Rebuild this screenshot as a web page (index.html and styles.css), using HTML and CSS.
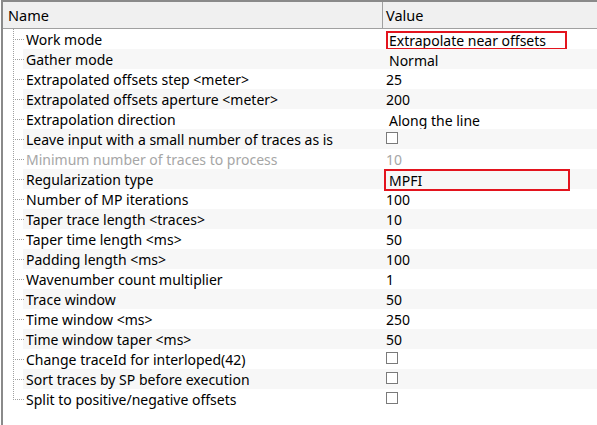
FILE: index.html
```html
<!DOCTYPE html>
<html>
<head>
<meta charset="utf-8">
<link rel="stylesheet" href="styles.css">
</head>
<body>
<div class="grid">
  <div class="head">
    <div class="hcell hname">Name</div>
    <div class="hcell hvalue">Value</div>
  </div>
  <div class="rows">
    <div class="row"><div class="branch"></div><div class="name">Work mode</div><div class="value combo">Extrapolate near offsets<span class="mark mark1"></span></div></div>
    <div class="row alt"><div class="branch"></div><div class="name">Gather mode</div><div class="value combo">Normal</div></div>
    <div class="row"><div class="branch"></div><div class="name">Extrapolated offsets step &lt;meter&gt;</div><div class="value">25</div></div>
    <div class="row alt"><div class="branch"></div><div class="name">Extrapolated offsets aperture &lt;meter&gt;</div><div class="value">200</div></div>
    <div class="row"><div class="branch"></div><div class="name">Extrapolation direction</div><div class="value combo">Along the line</div></div>
    <div class="row alt"><div class="branch"></div><div class="name">Leave input with a small number of traces as is</div><div class="value"><span class="check"></span></div></div>
    <div class="row disabled"><div class="branch"></div><div class="name">Minimum number of traces to process</div><div class="value">10</div></div>
    <div class="row alt"><div class="branch"></div><div class="name">Regularization type</div><div class="value combo">MPFI<span class="mark mark2"></span></div></div>
    <div class="row"><div class="branch"></div><div class="name">Number of MP iterations</div><div class="value">100</div></div>
    <div class="row alt"><div class="branch"></div><div class="name">Taper trace length &lt;traces&gt;</div><div class="value">10</div></div>
    <div class="row"><div class="branch"></div><div class="name">Taper time length &lt;ms&gt;</div><div class="value">50</div></div>
    <div class="row alt"><div class="branch"></div><div class="name">Padding length &lt;ms&gt;</div><div class="value">100</div></div>
    <div class="row"><div class="branch"></div><div class="name">Wavenumber count multiplier</div><div class="value">1</div></div>
    <div class="row alt"><div class="branch"></div><div class="name">Trace window</div><div class="value">50</div></div>
    <div class="row"><div class="branch"></div><div class="name">Time window &lt;ms&gt;</div><div class="value">250</div></div>
    <div class="row alt"><div class="branch"></div><div class="name">Time window taper &lt;ms&gt;</div><div class="value">50</div></div>
    <div class="row"><div class="branch"></div><div class="name">Change traceId for interloped(42)</div><div class="value"><span class="check"></span></div></div>
    <div class="row alt"><div class="branch"></div><div class="name">Sort traces by SP before execution</div><div class="value"><span class="check"></span></div></div>
    <div class="row last"><div class="branch"></div><div class="name">Split to positive/negative offsets</div><div class="value"><span class="check"></span></div></div>
  </div>
</div>
</body>
</html>
```

FILE: styles.css
```css
html, body {
  margin: 0;
  padding: 0;
  background: #ffffff;
}
body {
  width: 597px;
  height: 425px;
  overflow: hidden;
  font-family: "Noto Sans", "Open Sans", sans-serif;
  font-size: 14px;
  color: #000000;
}
.grid {
  margin-left: 1px;
  height: 425px;
  border-left: 2px solid #8a8a8a;
  border-top: 2px solid #8a8a8a;
  box-sizing: border-box;
}
.head {
  display: flex;
  height: 26px;
  background: #f0f0f0;
  border-bottom: 1px solid #a0a0a0;
}
.hcell {
  display: flex;
  align-items: center;
  padding-left: 5px;
  font-size: 14.5px;
}
.hname {
  width: 374px;
  border-right: 1px solid #a0a0a0;
}
.hvalue {
  flex: 1;
  padding-left: 3px;
}
.rows {
  display: flex;
  flex-direction: column;
}
.row {
  display: flex;
  height: 20px;
  line-height: 22px;
}
.branch {
  width: 20px;
  flex: none;
  position: relative;
  background: #ffffff;
}
.branch::before {
  content: "";
  position: absolute;
  left: 10px;
  top: 0;
  width: 1px;
  height: 20px;
  background: repeating-linear-gradient(to bottom, #a0a0a0 0 1px, transparent 1px 2px);
}
.row.last .branch::before {
  height: 11px;
}
.branch::after {
  content: "";
  position: absolute;
  left: 11px;
  top: 10px;
  width: 10px;
  height: 1px;
  background: repeating-linear-gradient(to right, transparent 0 1px, #a0a0a0 1px 2px);
}
.name {
  width: 357px;
  padding-left: 3px;
  flex: none;
  white-space: nowrap;
  overflow: hidden;
}
.value {
  flex: 1;
  padding-left: 3px;
  position: relative;
  white-space: nowrap;
}
.row.alt .name,
.row.alt .value {
  background: #f7f7f7;
}
.combo {
  padding-left: 6px;
  padding-top: 1px;
  box-sizing: border-box;
}
.row.disabled {
  color: #a6a6a6;
}
.check {
  display: inline-block;
  width: 12px;
  height: 12px;
  margin-top: 3px;
  border: 1px solid #7a7a7a;
  background: #ffffff;
  box-sizing: border-box;
  vertical-align: top;
}
.mark {
  position: absolute;
  border: 2px solid #e3141e;
  box-sizing: border-box;
}
.mark1 {
  left: 3px;
  top: 2px;
  width: 181px;
  height: 19px;
}
.mark2 {
  left: 1px;
  top: 0px;
  width: 186px;
  height: 22px;
}
```
